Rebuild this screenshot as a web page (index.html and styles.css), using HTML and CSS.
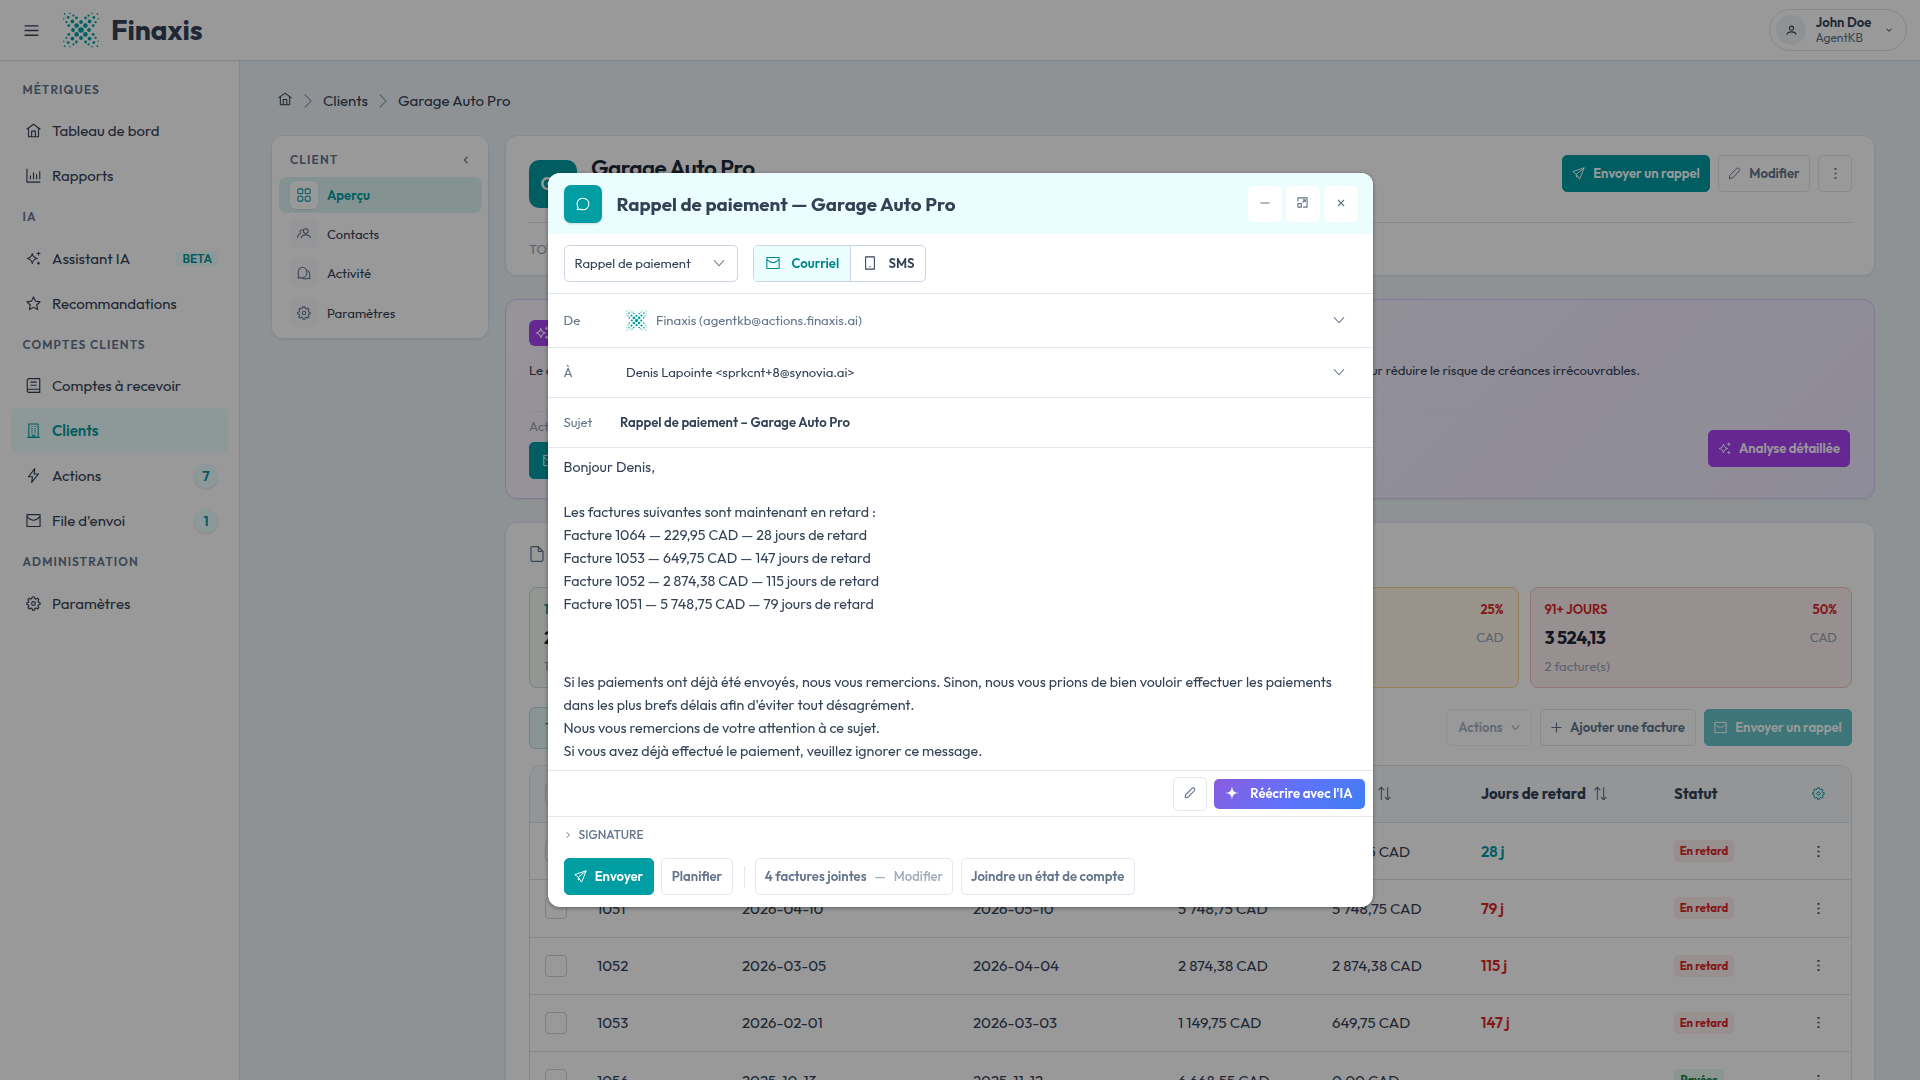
FILE: index.html
```html
<!DOCTYPE html>
<html lang="fr">
<head>
  <meta charset="UTF-8" />
  <title>Finaxis - Garage Auto Pro</title>
  <link rel="stylesheet" href="styles.css">
</head>
<body>
  <svg class="sprite" width="0" height="0">
    <defs>
      <g id="dots">
        <circle cx="22.4" cy="13.6" r="2.3"/><circle cx="26.6" cy="9.4" r="1.9"/><circle cx="30.8" cy="5.4" r="1.4"/><circle cx="34.4" cy="1.8" r=".9"/>
        <circle cx="22.6" cy="6" r="1.4"/><circle cx="30.2" cy="13.6" r="1.4"/><circle cx="25.6" cy="3.6" r="1.1"/><circle cx="32.6" cy="10.2" r="1.1"/>
        <circle cx="29" cy="1.2" r=".8"/><circle cx="35.2" cy="6.8" r=".7"/>
      </g>
      <symbol id="logo" viewBox="0 0 36 36">
        <circle cx="18" cy="18" r="2.8"/>
        <circle cx="18" cy="10" r="1.9"/><circle cx="18" cy="26" r="1.9"/><circle cx="10" cy="18" r="1.9"/><circle cx="26" cy="18" r="1.9"/>
        <use href="#dots"/>
        <use href="#dots" transform="translate(36 0) scale(-1 1)"/>
        <use href="#dots" transform="translate(0 36) scale(1 -1)"/>
        <use href="#dots" transform="translate(36 36) scale(-1 -1)"/>
      </symbol>
      <symbol id="menu" viewBox="0 0 24 24"><path d="M1 4.500h22M1 12h22M1 19.500h22"/></symbol>
      <symbol id="home" viewBox="0 0 24 24"><path d="M1 10 12 2l11 8M4 8v14h16V8M9 22v-9h6v9"/></symbol>
      <symbol id="chart" viewBox="0 0 24 24"><path d="M1.500 1v21.500H23M7 18v-6M12 18V7M17 18v-8M22 18V5"/></symbol>
      <symbol id="sparkles" viewBox="0 0 24 24"><path d="M10 4c1 5 3 7 8 8-5 1-7 3-8 8-1-5-3-7-8-8 5-1 7-3 8-8zM20 1v6M17 4h6M20 17v5M17.500 19.500h5"/></symbol>
      <symbol id="star" viewBox="0 0 24 24"><path d="m12 1.500 3.200 6.700 7.300 1-5.300 5.200 1.300 7.300L12 18.200l-6.500 3.500 1.300-7.300L1.500 9.200l7.300-1z"/></symbol>
      <symbol id="book" viewBox="0 0 24 24"><path d="M4.500 1H22v22H4.500C3 23 2 22 2 20.500v-17C2 2 3 1 4.500 1zM2 20.500C2 19 3 18 4.500 18H22M7 6.500h10M7 11.500h10"/></symbol>
      <symbol id="building" viewBox="0 0 24 24"><path d="M4.500 23V1.500h15V23M2 23h20M10 23v-3.500h4V23M8.500 5.500h2M13.500 5.500h2M8.500 9h2M13.500 9h2M8.500 12.500h2M13.500 12.500h2M8.500 16h2M13.500 16h2"/></symbol>
      <symbol id="bolt" viewBox="0 0 24 24"><path d="M14 1 4 14h6.500L9 23l11-13.500h-7z"/></symbol>
      <symbol id="mail" viewBox="0 0 24 24"><path d="M1.500 2.500h21v19h-21zM1.500 5.500c4 5 7 6 10.500 6s6.500-1 10.500-6"/></symbol>
      <symbol id="gear" viewBox="0 0 24 24"><circle cx="12" cy="12" r="3"/><path d="m9.800 1.500-.5 2.600-2 .9-2.300-1.500-2 2.500 1.500 2.300-.8 2-2.500.5v2.800l2.600.6.8 2-1.500 2.300 2.300 2.200 2.300-1.500 2 .8.500 2.600h3.400l.5-2.600 2-.8 2.300 1.500 2.200-2.300-1.500-2.200.8-2 2.600-.6v-2.800l-2.600-.6-.8-2 1.500-2.300L18.400 3.500 16.200 5l-2-.8-.6-2.700z"/></symbol>
      <symbol id="grid" viewBox="0 0 24 24"><rect x="1.500" y="1.500" width="8.500" height="8.500" rx="2"/><rect x="14" y="1.500" width="8.500" height="8.500" rx="2"/><rect x="1.500" y="14" width="8.500" height="8.500" rx="2"/><rect x="14" y="14" width="8.500" height="8.500" rx="2"/></symbol>
      <symbol id="people" viewBox="0 0 24 24"><circle cx="15" cy="7" r="4"/><path d="M7 19c1-4 4-5.500 8-5.500s7 1.500 8.500 5.500M10 5.500C7.500 4.500 5 6 5 8.500c0 1.500.8 2.500 2 3.200M.5 18.500c.3-3.500 2-5.500 5-6.300"/></symbol>
      <symbol id="chats" viewBox="0 0 24 24"><path d="M3 17l-1 4 4-1c6 1.500 11-2 11-8.500S13 2 9.500 2 2 5.500 2 10.500c0 2.500 0 4.500 1 6.500zM18 7c3 2 4 5 4 8v7l-3-1c-3 1.500-7 1.500-10-.8"/></symbol>
      <symbol id="chat" viewBox="0 0 24 24"><path d="M2 22l1.500-4.500C-.5 11 3 2 12 2c6 0 10 4.500 10 10s-4 10-10 10c-2 0-4-.5-5.500-1.500z"/></symbol>
      <symbol id="user" viewBox="0 0 24 24"><circle cx="12" cy="7" r="4.500"/><path d="M2 21c1-4.500 5-6 10-6s9 1.500 10 6"/></symbol>
      <symbol id="send" viewBox="0 0 24 24"><path d="M22.500 1.500 1.500 8.500l6.500 5 6 9zM8 13.500l14.500-12M8 13.500v5l3-1.500"/></symbol>
      <symbol id="pencil" viewBox="0 0 24 24"><path d="m2.500 21.500.8-6L15.500 3.300c3.500-3.500 8 .8 4.800 4.500L8.500 20.200z"/></symbol>
      <symbol id="more" viewBox="0 0 24 24"><path d="M12 2v3M12 10.500v3M12 19v3"/></symbol>
      <symbol id="down" viewBox="0 0 24 24"><path d="m2 6.500 10 11 10-11"/></symbol>
      <symbol id="right" viewBox="0 0 24 24"><path d="m6.500 1 11 11-11 11"/></symbol>
      <symbol id="left" viewBox="0 0 24 24"><path d="m17 2-10 10 10 10"/></symbol>
      <symbol id="phone" viewBox="0 0 24 24"><path d="M4.500 1.500h15v21h-15zM12 17v2"/></symbol>
      <symbol id="minus" viewBox="0 0 24 24"><path d="M1 12h22"/></symbol>
      <symbol id="plus" viewBox="0 0 24 24"><path d="M12 1v22M1 12h22"/></symbol>
      <symbol id="close" viewBox="0 0 24 24"><path d="m3 3 18 18M21 3 3 21"/></symbol>
      <symbol id="expand" viewBox="0 0 24 24"><path d="M2 10V2h20v20h-9M2 14.500h7.500V22H2zM12 12l6-6M12.500 6H18v5.500"/></symbol>
      <symbol id="file" viewBox="0 0 24 24"><path d="M5 1h9l7 7v13c0 1.200-.8 2-2 2H5c-1.200 0-2-.8-2-2V3c0-1.200.8-2 2-2zM14 1v7h7"/></symbol>
      <symbol id="sort" viewBox="0 0 24 24"><path d="M7 22V2M2.500 6.500 7 2l4.500 4.500M17 2v20M12.500 17.500 17 22l4.500-4.500"/></symbol>
      <symbol id="spark" viewBox="0 0 24 24"><path d="M12 0c1 9 3 11 12 12-9 1-11 3-12 12-1-9-3-11-12-12 9-1 11-3 12-12z" fill="currentColor" stroke="none"/></symbol>
    </defs>
  </svg>

  <header class="topbar">
    <svg class="icon menu"><use href="#menu"/></svg>
    <svg class="logo"><use href="#logo"/></svg>
    <span class="brand">Finaxis</span>
    <div class="account">
      <span class="avatar"><svg class="icon s11"><use href="#user"/></svg></span>
      <div class="who"><strong>John Doe</strong><span>AgentKB</span></div>
      <svg class="icon s6"><use href="#down"/></svg>
    </div>
  </header>

  <div class="layout">
    <nav class="sidebar">
      <h2>Métriques</h2>
      <a><svg class="icon"><use href="#home"/></svg>Tableau de bord</a>
      <a><svg class="icon"><use href="#chart"/></svg>Rapports</a>
      <h2>IA</h2>
      <a><svg class="icon"><use href="#sparkles"/></svg>Assistant IA<span class="beta">BETA</span></a>
      <a><svg class="icon"><use href="#star"/></svg>Recommandations</a>
      <h2>Comptes clients</h2>
      <a><svg class="icon"><use href="#book"/></svg>Comptes à recevoir</a>
      <a class="active"><svg class="icon"><use href="#building"/></svg>Clients</a>
      <a><svg class="icon"><use href="#bolt"/></svg>Actions<span class="count">7</span></a>
      <a><svg class="icon"><use href="#mail"/></svg>File d'envoi<span class="count">1</span></a>
      <h2>Administration</h2>
      <a><svg class="icon"><use href="#gear"/></svg>Paramètres</a>
    </nav>

    <main>
      <div class="breadcrumb">
        <svg class="icon s14"><use href="#home"/></svg>
        <svg class="icon arrow"><use href="#right"/></svg>
        <span class="crumb">Clients</span>
        <svg class="icon arrow"><use href="#right"/></svg>
        <span>Garage Auto Pro</span>
      </div>

      <div class="columns">
        <aside class="subnav">
          <div class="subnav-title">CLIENT<svg class="icon s8"><use href="#left"/></svg></div>
          <a class="active"><span class="tile"><svg class="icon s14"><use href="#grid"/></svg></span>Aperçu</a>
          <a><span class="tile"><svg class="icon s14"><use href="#people"/></svg></span>Contacts</a>
          <a><span class="tile"><svg class="icon s14"><use href="#chats"/></svg></span>Activité</a>
          <a><span class="tile"><svg class="icon s14"><use href="#gear"/></svg></span>Paramètres</a>
        </aside>

        <div class="content">
          <section class="card client-card">
            <div class="client-head">
              <span class="client-avatar">GA</span>
              <h1>Garage Auto Pro</h1>
              <div class="head-actions">
                <button class="btn primary w148"><svg class="icon s13"><use href="#send"/></svg>Envoyer un rappel</button>
                <button class="btn w92"><svg class="icon s13"><use href="#pencil"/></svg>Modifier</button>
                <button class="btn w34"><svg class="icon dots"><use href="#more"/></svg></button>
              </div>
            </div>
            <div class="client-stats">TOTAL</div>
          </section>

          <section class="card ai-card">
            <span class="ai-tag"><svg class="icon s14"><use href="#sparkles"/></svg></span>
            <p><span>Le client</span><span>pour réduire le risque de créances irrécouvrables.</span></p>
            <div class="ai-foot">
              <div>
                <span class="muted">Actions</span>
                <button class="btn primary mail-button"><svg class="icon s13"><use href="#mail"/></svg></button>
              </div>
              <button class="btn violet"><svg class="icon s13"><use href="#sparkles"/></svg>Analyse détaillée</button>
            </div>
          </section>

          <section class="card invoices">
            <div class="invoices-title"><svg class="icon"><use href="#file"/></svg></div>
            <div class="buckets">
              <div class="bucket ok"><div><b>1-30 JOURS</b></div><div><strong>229,95</strong></div><div><span>1 facture(s)</span></div></div>
              <div class="bucket"></div>
              <div class="bucket warn"><div><b></b><b>25%</b></div><div><strong></strong><span>CAD</span></div></div>
              <div class="bucket late"><div><b>91+ JOURS</b><b>50%</b></div><div><strong>3 524,13</strong><span>CAD</span></div><div><span>2 facture(s)</span></div></div>
            </div>
            <div class="toolbar">
              <span class="filter">Toutes</span>
              <button class="btn disabled w86">Actions<svg class="icon s9"><use href="#down"/></svg></button>
              <button class="btn w156"><svg class="icon s11"><use href="#plus"/></svg>Ajouter une facture</button>
              <button class="btn primary pale w148"><svg class="icon s13"><use href="#mail"/></svg>Envoyer un rappel</button>
            </div>
            <div class="table">
              <div class="row head">
                <i class="box"></i><span></span><span></span><span></span><span></span>
                <span>Solde<svg class="icon sort"><use href="#sort"/></svg></span>
                <span>Jours de retard<svg class="icon sort"><use href="#sort"/></svg></span>
                <span>Statut</span><svg class="icon teal s13"><use href="#gear"/></svg>
              </div>
              <div class="row"><i class="box"></i><span></span><span></span><span></span><span></span><span>229,95 CAD</span><b class="teal">28 j</b><span><em class="status">En retard</em></span><svg class="icon dots"><use href="#more"/></svg></div>
              <div class="row"><i class="box"></i><span>1051</span><span>2026-04-10</span><span>2026-05-10</span><span>5 748,75 CAD</span><span>5 748,75 CAD</span><b>79 j</b><span><em class="status">En retard</em></span><svg class="icon dots"><use href="#more"/></svg></div>
              <div class="row"><i class="box"></i><span>1052</span><span>2026-03-05</span><span>2026-04-04</span><span>2 874,38 CAD</span><span>2 874,38 CAD</span><b>115 j</b><span><em class="status">En retard</em></span><svg class="icon dots"><use href="#more"/></svg></div>
              <div class="row"><i class="box"></i><span>1053</span><span>2026-02-01</span><span>2026-03-03</span><span>1 149,75 CAD</span><span>649,75 CAD</span><b>147 j</b><span><em class="status">En retard</em></span><svg class="icon dots"><use href="#more"/></svg></div>
              <div class="row"><i class="box"></i><span>1056</span><span>2025-10-13</span><span>2025-11-12</span><span>6 668,55 CAD</span><span>0,00 CAD</span><b></b><span><em class="status paid">Payées</em></span><svg class="icon dots"><use href="#more"/></svg></div>
            </div>
          </section>
        </div>
      </div>
    </main>
  </div>

  <div class="overlay">
    <div class="modal">
      <div class="modal-head">
        <span class="modal-icon"><svg class="icon s14"><use href="#chat"/></svg></span>
        <h2>Rappel de paiement — Garage Auto Pro</h2>
        <div class="window-buttons">
          <button><svg class="icon s10"><use href="#minus"/></svg></button>
          <button><svg class="icon s11"><use href="#expand"/></svg></button>
          <button><svg class="icon s8"><use href="#close"/></svg></button>
        </div>
      </div>

      <div class="modal-tools">
        <div class="select">Rappel de paiement<svg class="icon s12"><use href="#down"/></svg></div>
        <div class="segmented">
          <span class="on"><svg class="icon s14"><use href="#mail"/></svg>Courriel</span>
          <span><svg class="icon s14"><use href="#phone"/></svg>SMS</span>
        </div>
      </div>

      <div class="field from">
        <label>De</label>
        <svg class="logo"><use href="#logo"/></svg>
        <span class="sender">Finaxis (agentkb@actions.finaxis.ai)</span>
        <svg class="icon s12"><use href="#down"/></svg>
      </div>
      <div class="field">
        <label>À</label>
        <span class="recipient">Denis Lapointe &lt;sprkcnt+8@synovia.ai&gt;</span>
        <svg class="icon s12"><use href="#down"/></svg>
      </div>
      <div class="field subject">
        <label>Sujet</label>
        <strong>Rappel de paiement – Garage Auto Pro</strong>
      </div>

      <div class="message">
        <p>Bonjour Denis,</p>
        <p class="invoice-lines">Les factures suivantes sont maintenant en retard :<br>
          Facture 1064 — 229,95 CAD — 28 jours de retard<br>
          Facture 1053 — 649,75 CAD — 147 jours de retard<br>
          Facture 1052 — 2 874,38 CAD — 115 jours de retard<br>
          Facture 1051 — 5 748,75 CAD — 79 jours de retard</p>
        <p>Si les paiements ont déjà été envoyés, nous vous remercions. Sinon, nous vous prions de bien vouloir effectuer les paiements<br>
          dans les plus brefs délais afin d'éviter tout désagrément.<br>
          Nous vous remercions de votre attention à ce sujet.<br>
          Si vous avez déjà effectué le paiement, veuillez ignorer ce message.</p>
      </div>

      <div class="ai-bar">
        <button class="btn w34"><svg class="icon s12"><use href="#pencil"/></svg></button>
        <button class="btn rewrite"><svg class="icon s14"><use href="#spark"/></svg>Réécrire avec l'IA</button>
      </div>

      <div class="signature"><svg class="icon s6"><use href="#right"/></svg>SIGNATURE</div>

      <div class="modal-foot">
        <button class="btn primary w90"><svg class="icon s13"><use href="#send"/></svg>Envoyer</button>
        <button class="btn w72">Planifier</button>
        <i class="separator"></i>
        <button class="btn attached">4 factures jointes<span>—</span><span>Modifier</span></button>
        <button class="btn w174">Joindre un état de compte</button>
      </div>
    </div>
  </div>
</body>
</html>
```
FILE: styles.css
```css
* {
  box-sizing: border-box;
}

body {
  margin: 0;
  height: 1080px;
  overflow: hidden;
  font-family: Outfit, Lato, sans-serif;
  font-size: 15px;
  color: #334155;
  background: #edf3f7;
}

h1, h2, p {
  margin: 0;
}

.sprite {
  display: block;
}

.icon {
  width: 15px;
  height: 15px;
  flex: none;
  fill: none;
  stroke: currentColor;
  stroke-width: 1.8;
  stroke-linejoin: round;
}

.s6 { width: 6px; height: 6px; stroke-width: 4; }
.s8 { width: 8px; height: 8px; stroke-width: 3.4; }
.s9 { width: 9px; height: 9px; stroke-width: 2.8; }
.s10 { width: 10px; height: 10px; stroke-width: 2.6; }
.s11 { width: 11px; height: 11px; stroke-width: 2.4; }
.s12 { width: 12px; height: 12px; stroke-width: 2.2; }
.s13 { width: 13px; height: 13px; }
.s14 { width: 14px; height: 14px; }
.dots { width: 13px; height: 13px; stroke-width: 3.6; }

.logo {
  width: 36px;
  height: 36px;
  fill: #00a0a6;
}

/* top bar */
.topbar {
  height: 60px;
  display: flex;
  align-items: center;
  padding: 0 13px 0 24px;
  background: #fff;
  box-shadow: 0 1px 1px #dde5ee;
  position: relative;
}

.topbar .menu {
  stroke-width: 2.2;
}

.topbar .logo {
  margin-left: 24px;
}

.brand {
  margin-left: 12px;
  padding-bottom: 2px;
  font-size: 28px;
  font-weight: 700;
  color: #334155;
}

.account {
  display: flex;
  align-items: center;
  width: 138px;
  height: 42px;
  margin-left: auto;
  padding: 0 14px 0 6px;
  border: 1px solid #dde5ee;
  border-radius: 21px;
}

.avatar {
  display: flex;
  align-items: center;
  justify-content: center;
  width: 30px;
  height: 30px;
  border-radius: 50%;
  background: #edf4f9;
}

.who {
  display: flex;
  flex-direction: column;
  margin: 0 auto 0 9.5px;
  font-size: 12px;
  line-height: 16px;
  color: #64748b;
}

.who strong {
  font-size: 13.125px;
  font-weight: 600;
  color: #334155;
}

/* sidebar */
.layout {
  display: flex;
  height: 1020px;
}

.sidebar {
  width: 240px;
  padding: 10.5px 11px;
  background: #fff;
  border-right: 1px solid #dde5ee;
}

.sidebar h2 {
  height: 37.5px;
  padding-left: 11.5px;
  line-height: 38px;
  font-size: 12px;
  font-weight: 600;
  letter-spacing: 1.1px;
  text-transform: uppercase;
  color: #64748b;
}

.sidebar a {
  display: flex;
  align-items: center;
  height: 45px;
  padding: 0 10px 0 15px;
  gap: 11px;
  border-radius: 6px;
}

.sidebar a.active {
  background: #ecfdff;
  color: #009da3;
  font-weight: 600;
}

.beta,
.count {
  margin-left: auto;
  background: #ecfdff;
  color: #00979d;
  font-weight: 600;
}

.beta {
  padding: 0 6px;
  font-size: 12px;
  line-height: 15px;
  border-radius: 4px;
}

.count {
  width: 24px;
  font-size: 14px;
  line-height: 24px;
  text-align: center;
  border-radius: 50%;
  box-shadow: 0 1px 2px rgba(0, 0, 0, .12);
}

/* page */
main {
  width: 1680px;
  padding: 0 45px 0 31px;
}

.breadcrumb {
  display: flex;
  align-items: center;
  height: 75px;
  padding: 6px 0 0 7px;
}

.breadcrumb .icon:first-child {
  margin-top: -3px;
}

.arrow {
  width: 14px;
  height: 14px;
  margin: 0 8.5px;
  color: #8290a5;
}

.crumb {
  width: 44px;
}

.columns {
  display: flex;
  gap: 16px;
  align-items: flex-start;
}

.subnav,
.card {
  background: #fff;
  border: 1px solid #e0e7ef;
  border-radius: 12px;
  box-shadow: 0 1px 2px rgba(0, 0, 0, .05);
}

.subnav {
  width: 218px;
  height: 204px;
  padding: 6px 6px 6px 7px;
  font-size: 13.125px;
}

.subnav-title {
  display: flex;
  align-items: center;
  justify-content: space-between;
  height: 35px;
  padding: 0 12px 0 11px;
  font-size: 12px;
  font-weight: 600;
  letter-spacing: 1.1px;
  color: #64748b;
}

.subnav a {
  display: flex;
  align-items: center;
  height: 36px;
  margin-bottom: 3.2px;
  padding-left: 11px;
  gap: 9px;
  border-radius: 8px;
}

.subnav a.active {
  background: #dcf3f3;
  color: #009da3;
  font-weight: 600;
}

.tile {
  display: flex;
  align-items: center;
  justify-content: center;
  width: 28px;
  height: 28px;
  border-radius: 6px;
  background: #fafbfd;
  color: #64748b;
}

.active .tile {
  background: #fff;
  color: #009da3;
  box-shadow: 0 1px 2px rgba(0, 0, 0, .1);
}

.content {
  display: flex;
  flex-direction: column;
  flex: none;
  width: 1370px;
  gap: 23px;
}

.card {
  padding: 0 22px 0 23px;
}

.btn {
  display: flex;
  align-items: center;
  justify-content: center;
  gap: 8px;
  height: 37px;
  padding: 0 0 1px;
  white-space: nowrap;
  font-family: inherit;
  font-size: 13.125px;
  font-weight: 600;
  color: #64748b;
  background: #fff;
  border: 1px solid #e2e8f0;
  border-radius: 5px;
}

.btn.primary {
  color: #fff;
  background: #009da3;
  border-color: #009da3;
}

.w34 { width: 34px; }
.w72 { width: 72px; }
.w86 { width: 86px; }
.w90 { width: 90px; }
.w92 { width: 92px; }
.w148 { width: 148px; }
.w156 { width: 156px; }
.w174 { width: 174px; }

.client-card {
  height: 141px;
}

.client-head {
  display: flex;
  height: 87px;
  padding-top: 19px;
  border-bottom: 1px solid #dde5ee;
}

.client-avatar {
  width: 48px;
  height: 48px;
  margin: 5px 14px 0 0;
  line-height: 48px;
  text-align: center;
  font-size: 17px;
  font-weight: 600;
  color: #fff;
  background: #009da3;
  border-radius: 10px;
}

.client-head h1 {
  font-size: 22.5px;
  font-weight: 600;
  line-height: 26px;
  letter-spacing: -.5px;
  color: #1e293b;
}

.head-actions {
  display: flex;
  gap: 8px;
  margin-left: auto;
}

.client-stats {
  padding-top: 18px;
  font-size: 13px;
  color: #94a3b8;
}

.ai-card {
  height: 200px;
  padding-top: 20px;
  background: linear-gradient(135deg, #faf5ff, #ede9fe);
  border-color: #dacdf9;
}

.ai-tag {
  display: flex;
  align-items: center;
  width: 60px;
  height: 26px;
  padding-left: 6px;
  color: #fff;
  background: #a944f5;
  border-radius: 6px;
}

.ai-card p {
  display: flex;
  justify-content: space-between;
  width: 1111px;
  height: 65px;
  padding-top: 16px;
  font-size: 13.125px;
}

.ai-foot {
  display: flex;
  justify-content: space-between;
  padding-top: 6px;
  border-top: 1px solid #eee6fb;
}

.muted {
  display: block;
  height: 24px;
  font-size: 13px;
  color: #94a3b8;
}

.mail-button {
  width: 120px;
  padding-right: 80px;
}

.btn.violet {
  width: 142px;
  margin: 12px 2px 0 0;
  color: #fff;
  background: #a944f5;
  border-color: #a944f5;
}

.invoices {
  height: 640px;
}

.invoices-title {
  display: flex;
  align-items: center;
  height: 64px;
  padding-bottom: 3px;
  color: #64748b;
}

.invoices-title .icon {
  width: 16px;
  height: 16px;
}

.buckets {
  display: grid;
  grid-template-columns: repeat(4, 1fr);
  gap: 11px;
}

.bucket {
  height: 101px;
  padding: 9px 14px;
  font-size: 13px;
  color: #94a3b8;
  background: #f8fafc;
  border: 1px solid #e2e8f0;
  border-radius: 8px;
}

.bucket div {
  display: flex;
  align-items: center;
  justify-content: space-between;
  height: 24px;
}

.bucket div + div {
  height: 32px;
}

.bucket div + div + div {
  height: 26px;
}

.bucket b {
  font-weight: 600;
}

.bucket strong {
  font-size: 18px;
  font-weight: 700;
  letter-spacing: -.5px;
  color: #1e293b;
}

.bucket.ok { background: #f4fcf7; border-color: #c4dfd5; }
.bucket.ok b { color: #009da3; }
.bucket.warn { background: #fff7e8; border-color: #f8d68c; }
.bucket.late { background: #fef0f0; border-color: #f9c5c5; }
.bucket.late b, .bucket.warn b { color: #dc2626; }

.toolbar {
  display: flex;
  align-items: center;
  gap: 8px;
  height: 77px;
  padding-top: 2px;
}

.filter {
  width: 120px;
  height: 42px;
  margin-right: auto;
  padding-left: 15px;
  line-height: 40px;
  color: #00777c;
  background: #e6f7f9;
  border: 1px solid #b9dde0;
  border-radius: 6px;
}

.toolbar .disabled {
  opacity: .55;
}

.btn.pale {
  background: #67c4c8;
  border-color: #67c4c8;
}

.table {
  border: 1px solid #dde5ee;
  border-radius: 12px 12px 0 0;
}

.row {
  display: grid;
  grid-template-columns: 52px 145px 231px 205px 154px 149px 193px 138px 14px;
  align-items: center;
  height: 57.2px;
  padding-left: 15px;
  border-bottom: 1px solid #dde5ee;
}

.row.head {
  padding-bottom: 1px;
  font-weight: 700;
  background: #f6f9fc;
  border-radius: 12px 12px 0 0;
}

.head span {
  display: flex;
  align-items: center;
  gap: 7px;
  white-space: nowrap;
}

.sort {
  color: #64748b;
}

.row b {
  font-weight: 600;
  color: #dc2626;
}

.box {
  width: 22px;
  height: 22px;
  border: 1px solid #cbd5e1;
  border-radius: 4px;
}

.status {
  display: inline-block;
  width: 60px;
  line-height: 22px;
  text-align: center;
  font-size: 11.25px;
  font-style: normal;
  font-weight: 700;
  color: #dc2626;
  background: #feeeee;
  border-radius: 5px;
}

.status.paid {
  width: 50px;
  color: #167c4a;
  background: #e8f8ef;
}

.icon.teal, .row b.teal {
  color: #009da3;
}

/* message window */
.overlay {
  position: fixed;
  inset: 0;
  display: flex;
  align-items: center;
  justify-content: center;
  background: rgba(0, 0, 0, .4);
}

.modal {
  width: 825px;
  height: 734px;
  overflow: hidden;
  background: #fff;
  border-radius: 12px;
  box-shadow: 0 1px 4px rgba(0, 0, 0, .4);
}

.modal-head {
  display: flex;
  align-items: center;
  height: 61px;
  padding: 0 15px 0 16px;
  background: #ecfdff;
}

.modal-icon {
  display: flex;
  align-items: center;
  justify-content: center;
  width: 38px;
  height: 38px;
  margin-right: 15px;
  color: #fff;
  background: #009da3;
  border-radius: 7px;
  box-shadow: 0 1px 2px rgba(0, 0, 0, .15);
}

.modal-head h2 {
  font-size: 18.75px;
  font-weight: 700;
  color: #334155;
}

.window-buttons {
  display: flex;
  gap: 4px;
  margin-left: auto;
}

.window-buttons button {
  display: flex;
  align-items: center;
  justify-content: center;
  width: 34px;
  height: 36px;
  padding: 0 0 2px;
  color: #64748b;
  background: #fff;
  border: 0;
  border-radius: 6px;
}

.modal-tools {
  display: flex;
  gap: 15px;
  height: 60px;
  padding: 11px 16px;
  font-size: 13.125px;
  border-bottom: 1px solid #e2e8f0;
}

.select {
  display: flex;
  align-items: center;
  justify-content: space-between;
  width: 174px;
  height: 37px;
  padding: 0 12px 1px 10px;
  border: 1px solid #cbd5e1;
  border-radius: 5px;
}

.select .icon {
  color: #64748b;
}

.segmented {
  display: flex;
  width: 173px;
  height: 37px;
  overflow: hidden;
  font-weight: 600;
  border: 1px solid #cbd5e1;
  border-radius: 5px;
}

.segmented span {
  display: flex;
  align-items: center;
  gap: 12px;
  padding: 0 0 1px 12px;
}

.segmented .on {
  width: 97px;
  color: #00858b;
  background: #ecfdff;
  border-right: 1px solid #cbd5e1;
}

.field {
  display: flex;
  align-items: center;
  height: 50px;
  padding: 0 28px 1px 16px;
  font-size: 13.125px;
  border-bottom: 1px solid #e2e8f0;
}

.field label {
  width: 62.5px;
  color: #64748b;
}

.field.from {
  height: 54px;
  color: #64748b;
}

.field .logo {
  width: 21px;
  height: 21px;
  margin-right: 9px;
}

.field > .icon {
  margin-left: auto;
  color: #64748b;
}

.subject label {
  width: 56.5px;
}

.subject strong {
  font-weight: 600;
}

.message {
  height: 323px;
  padding: 8px 16px;
  font-size: 14.25px;
  line-height: 22.9px;
  white-space: nowrap;
  border-bottom: 1px solid #e2e8f0;
}

.message .invoice-lines {
  margin: 22.3px 0 55.6px;
}

.ai-bar {
  display: flex;
  align-items: center;
  justify-content: flex-end;
  gap: 7px;
  height: 46px;
  padding-right: 8px;
  border-bottom: 1px solid #e2e8f0;
}

.ai-bar .btn {
  height: 34px;
}

.ai-bar .rewrite {
  width: 151px;
  height: 30px;
  gap: 11px;
  color: #fff;
  border: 0;
  background: linear-gradient(135deg, #8b5cdd, #6172fa 50%, #3f7ff4);
}

.signature {
  display: flex;
  align-items: center;
  gap: 8px;
  height: 36px;
  padding: 0 0 1px 17px;
  font-size: 12px;
  font-weight: 500;
  color: #64748b;
}

.modal-foot {
  display: flex;
  align-items: center;
  gap: 7.5px;
  padding: 5px 16px;
}

.separator {
  width: 1px;
  height: 22px;
  margin: 0 3px;
  background: #e2e8f0;
}

.attached {
  width: 198px;
}

.attached span {
  font-weight: 500;
  color: #a0adbd;
}
```
